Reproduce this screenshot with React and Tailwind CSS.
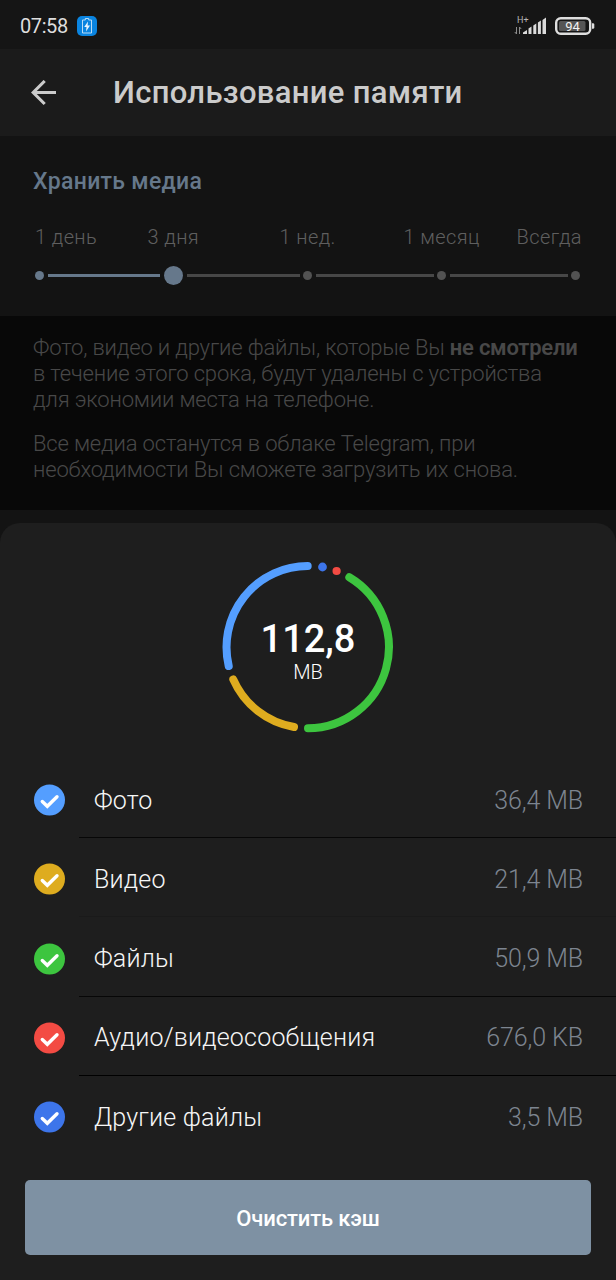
import React from "react";

const CATEGORIES = [
  { name: "Фото", size: "36,4 MB", color: "#549eff", line: "border-[#070707]" },
  { name: "Видео", size: "21,4 MB", color: "#deac1f", line: "border-[#1a1a1a]" },
  { name: "Файлы", size: "50,9 MB", color: "#3dc53f", line: "border-[#070707]" },
  { name: "Аудио/видеосообщения", size: "676,0 KB", color: "#f34b43", line: "border-black" },
  { name: "Другие файлы", size: "3,5 MB", color: "#3d75ea", line: "border-transparent" },
];

function StatusBar() {
  return (
    <div className="flex h-[49px] items-center bg-[#151515] pl-5 pr-[20px] pt-[3px]">
      <span className="w-[57px] text-[20px] leading-none tracking-[-0.4px] text-[#dedede]">07:58</span>
      <svg width="20" height="20" viewBox="0 0 20 20" fill="none">
        <rect width="20" height="20" rx="5" fill="#0a84e0" />
        <path d="M5.500 4h2.800V2.500h3.400V4h2.800v13h-9z" stroke="#b9dcf7" strokeWidth="1" />
        <path d="M11 5.500 7.200 11h2.300L9 15.500l4-6h-2.400z" fill="#e9f5ff" />
      </svg>
      <div className="ml-auto flex items-center">
        <svg width="36" height="22" viewBox="0 0 36 22" fill="#dadada">
          <text x="3" y="8" fontFamily="Roboto" fontSize="9" fill="#b5b5b5">H+</text>
          <path d="M2.500 12v7M.8 17l1.700 2M5.500 19v-7M5.500 12l1.700 2" stroke="#8c8c8c" fill="none" strokeWidth="1" />
          <path d="M9 19v-1.500l4-2.500v4zM14.500 13.500l3-2V19h-3zM19.300 10.500l3-2V19h-3zM23.900 7.500l3-2V19h-3zM28.500 5 32 2.500V19h-3.500z" />
        </svg>
        <svg className="ml-[5px]" width="41" height="20" viewBox="0 0 41 20">
          <rect x="1.200" y="2.200" width="34" height="15.600" rx="4.500" fill="none" stroke="#dedede" strokeWidth="2.400" />
          <rect x="4" y="5" width="26.500" height="10" rx="1.500" fill="#555" />
          <path d="M37 7.200h1q1.300 0 1.300 1.300v3q0 1.300-1.300 1.300h-1z" fill="#dedede" />
          <text x="17.500" y="14.600" textAnchor="middle" fontFamily="Roboto" fontSize="13" fill="#f2f2f2">94</text>
        </svg>
      </div>
    </div>
  );
}

function Header() {
  return (
    <div className="flex h-[87px] items-center bg-[#1b1b1b] pl-[31px]">
      <svg width="26" height="26" viewBox="0 0 26 26" fill="none" stroke="#cbcbcb" strokeWidth="3.100">
        <path d="M25 12.500H3M13.700 1 2.200 12.500l11.500 11.500" />
      </svg>
      <h1 className="ml-[56px] text-[31px] font-medium leading-none tracking-[0.31px] text-[#cbcbcb]">Использование памяти</h1>
    </div>
  );
}

function Track({ className }) {
  return <div className={`h-[3px] ${className}`} />;
}

function Dot({ active }) {
  return <div className={`size-[9px] shrink-0 rounded-full ${active ? "bg-[#66788b]" : "bg-[#525252]"}`} />;
}

function KeepMedia() {
  return (
    <div className="h-[180px] bg-[#131313] px-[33px] pt-[34px]">
      <h2 className="text-[23px] font-medium leading-6 tracking-[0.3px] text-[#66788b]">Хранить медиа</h2>
      <div className="mt-[31px] flex text-[20px] font-light leading-6 tracking-[0.4px] text-[#5f5f5f]">
        <span className="w-[114.500px] pl-[2px]">1 день</span>
        <span className="w-[132px]">3 дня</span>
        <span className="w-[124px]">1 нед.</span>
        <span>1 месяц</span>
        <span className="-mr-px ml-auto pr-[2px]">Всегда</span>
      </div>
      <div className="mt-[16px] flex h-[21px] items-center pl-[2px]">
        <Dot active />
        <Track className="ml-1 mr-[3.500px] w-[112px] bg-[#66788b]" />
        <div className="size-[19px] rounded-full bg-[#66788b]" />
        <Track className="ml-[4.500px] mr-[3.500px] w-[112.500px] bg-[#474747]" />
        <Dot />
        <Track className="ml-1 mr-[3.500px] w-[117.500px] bg-[#474747]" />
        <Dot />
        <Track className="ml-1 mr-[3.500px] w-[117.500px] bg-[#474747]" />
        <Dot />
      </div>
    </div>
  );
}

function Notice() {
  return (
    <div className="h-[194px] whitespace-nowrap bg-[#080808] pl-[33px] pt-[19px] text-[22px] font-light leading-[26px] tracking-[-0.16px] text-[#484848]">
      <p>
        Фото, видео и другие файлы, которые Вы <b className="font-semibold tracking-[-0.26px]">не смотрели</b>
        <br />
        в течение этого срока, будут удалены с устройства
        <br />
        для экономии места на телефоне.
      </p>
      <p className="mt-[18px]">
        Все медиа останутся в облаке Telegram, при
        <br />
        необходимости Вы сможете загрузить их снова.
      </p>
    </div>
  );
}

function UsageRing() {
  return (
    <div className="grid h-[172px] w-[172px] place-items-center">
      <svg className="col-start-1 row-start-1" width="172" height="172" viewBox="222 561 172 172" fill="none" strokeWidth="8" strokeLinecap="round">
        <path d="M307.700 566A81.300 81.300 0 0 0 228.700 666" stroke="#549eff" />
        <path d="M233.300 679.500A81.300 81.300 0 0 0 294 727" stroke="#deac1f" />
        <path d="M308 728.300A81.300 81.300 0 0 0 349.300 577.200" stroke="#3dc53f" />
        <circle cx="322.500" cy="567" r="4.400" fill="#3d75ea" />
        <circle cx="336.600" cy="571" r="4.100" fill="#f34b43" />
      </svg>
      <div className="col-start-1 row-start-1 flex flex-col items-center pt-[9px] text-white">
        <span className="text-[38px] font-medium leading-[38px]">112,8</span>
        <span className="mt-[2px] text-[20px] font-light leading-6">MB</span>
      </div>
    </div>
  );
}

function CategoryRow({ name, size, color, line }) {
  return (
    <div className="flex h-[79.25px] pl-[33px]">
      <svg className="mt-[25.250px]" width="32" height="32" viewBox="0 0 32 32" fill="none">
        <circle cx="16.500" cy="16" r="15.500" fill={color} />
        <path d="M9.300 17.500 14.300 22.300 24 12.800" stroke="white" strokeWidth="3.400" strokeLinecap="round" strokeLinejoin="miter" />
      </svg>
      <div className={`ml-[14px] flex flex-1 items-center justify-between border-b pl-[15px] pr-[33px] pt-[5.500px] text-[25px] font-light leading-8 ${line}`}>
        <span className="tracking-[0.2px] text-[#f6f6f6]">{name}</span>
        <span className="tracking-[-0.1px] text-[#7d8590]">{size}</span>
      </div>
    </div>
  );
}

export default function App() {
  return (
    <div className="h-[1280px] w-[616px] overflow-hidden bg-[#131313] font-['Roboto',sans-serif]">
      <StatusBar />
      <Header />
      <KeepMedia />
      <Notice />
      <div className="mt-[13px] flex h-[757px] flex-col rounded-t-[20px] bg-[#1e1e1e]">
        <div className="flex h-[235.750px] justify-center pt-[38px]">
          <UsageRing />
        </div>
        <div>
          {CATEGORIES.map((c) => (
            <CategoryRow key={c.name} {...c} />
          ))}
        </div>
        <button className="mx-[25px] mt-[24.750px] h-[75px] rounded-[5px] bg-[#7e91a3] pt-[2px] text-[22px] font-medium tracking-[-0.15px] text-white">
          Очистить кэш
        </button>
      </div>
    </div>
  );
}
